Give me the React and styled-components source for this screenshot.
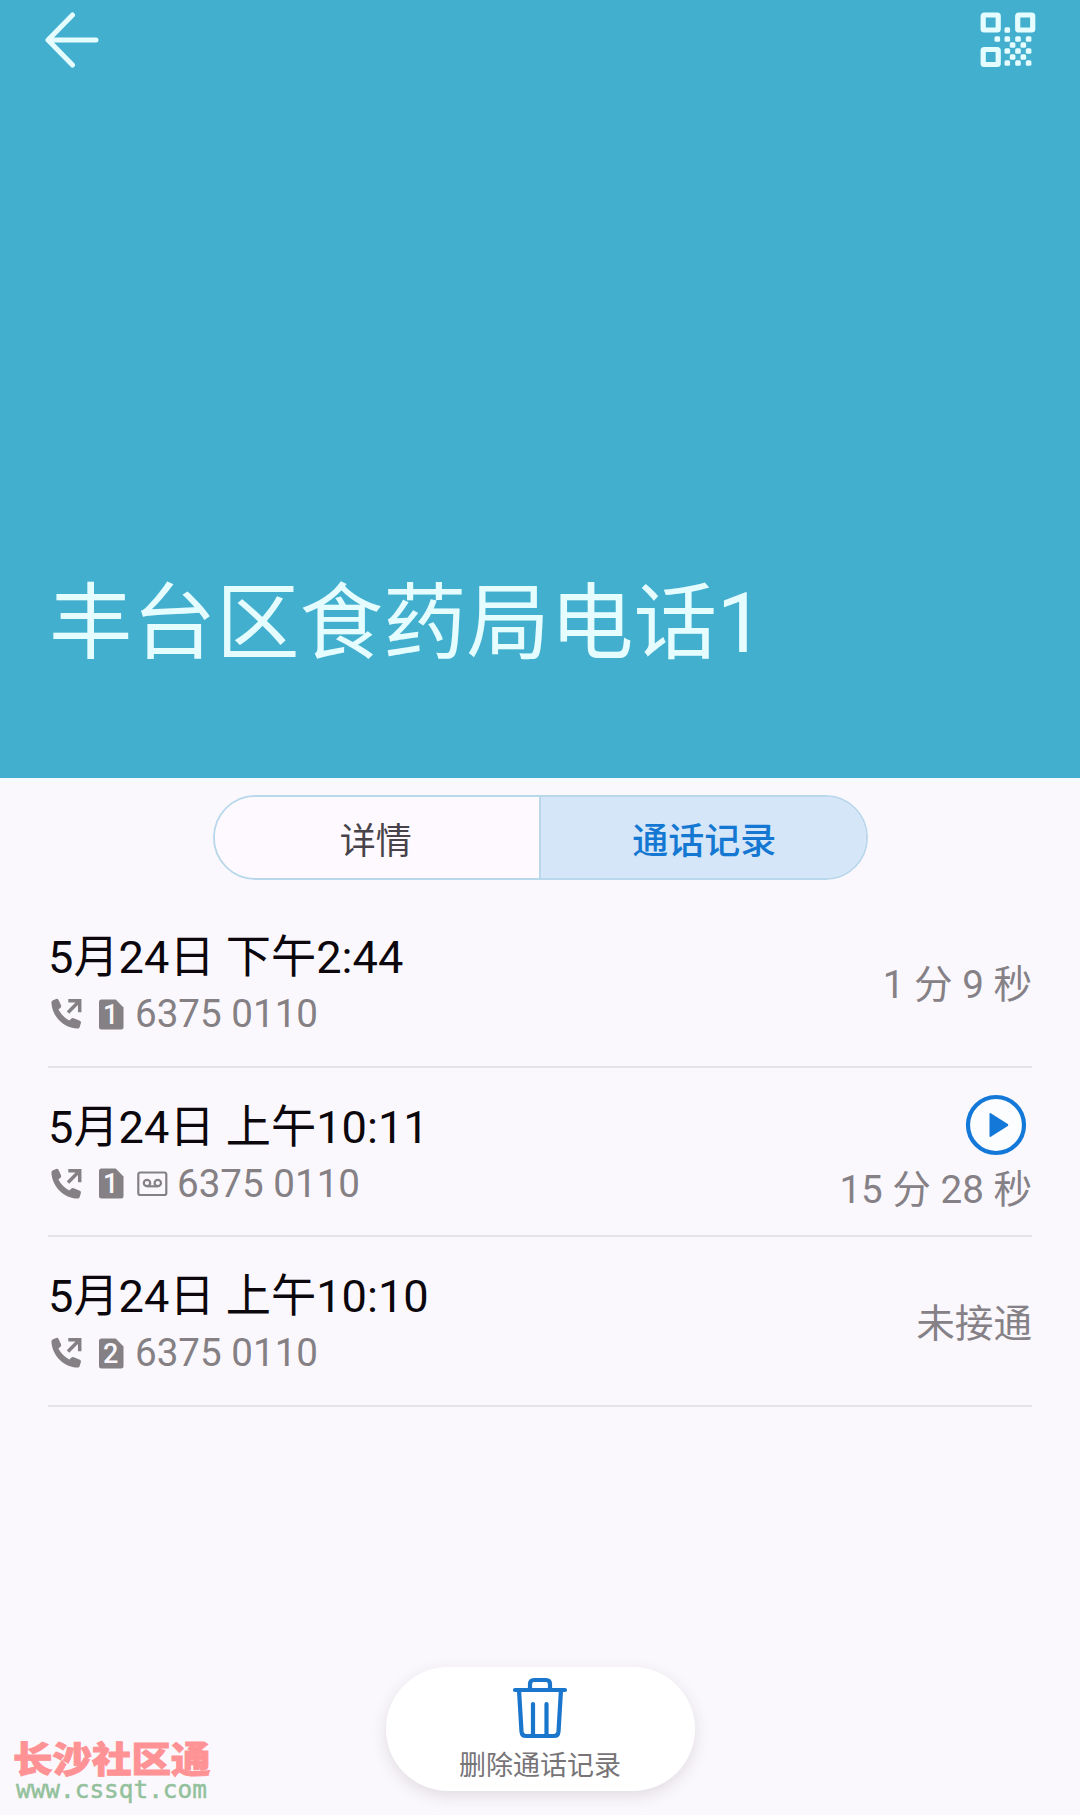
import React from 'react';
import styled, { createGlobalStyle } from 'styled-components';

const GlobalStyle = createGlobalStyle`
  * {
    box-sizing: border-box;
  }

  body {
    margin: 0;
    background-color: #fbf8fd;
    font-family: Roboto, 'Noto Sans CJK SC', sans-serif;
  }
`;

const Screen = styled.div`
  position: relative;
  display: flex;
  flex-direction: column;
  width: 1080px;
  height: 1815px;
  overflow: hidden;
  background-color: #fbf8fd;
`;

const Header = styled.header`
  display: flex;
  flex-direction: column;
  justify-content: space-between;
  flex: none;
  height: 778px;
  padding: 12px 44px 104px;
  color: #e6fdff;
  background-color: #43afcf;
  box-shadow: 0 4px 0 #f4fbff;
`;

const Toolbar = styled.div`
  display: flex;
  justify-content: space-between;
`;

const IconButton = styled.button`
  display: flex;
  padding: 0;
  border: 0;
  color: inherit;
  background: none;
`;

const Name = styled.h1`
  margin: 0;
  padding-left: 5px;
  font-size: 83.5px;
  font-weight: 400;
  line-height: 100px;
  white-space: nowrap;
`;

const Tabs = styled.nav`
  display: flex;
  flex: none;
  align-self: center;
  width: 655px;
  height: 85px;
  margin-top: 17px;
  border: 2px solid #b9d8ec;
  border-radius: 43px;
  overflow: hidden;
`;

const Tab = styled.button`
  flex: 1;
  padding: ${props => (props.$active ? '0 0 0 2px' : '0 2px 0 0')};
  border: 0;
  border-left: ${props => (props.$active ? '2px solid #b9d8ec' : '0')};
  font-family: inherit;
  font-size: 36px;
  font-weight: ${props => (props.$active ? 500 : 400)};
  color: ${props => (props.$active ? '#1478d2' : '#48434a')};
  background-color: ${props => (props.$active ? '#d5e6f9' : '#fdf9fe')};
`;

const CallList = styled.ul`
  margin: 18px 48px 0;
  padding: 0;
  list-style: none;
`;

const CallRow = styled.li`
  display: flex;
  justify-content: space-between;
  height: 169.6px;
  padding-top: 30px;
  border-bottom: 2px solid #e6e3e8;
`;

const CallDate = styled.div`
  font-size: 45.2px;
  line-height: 60px;
  color: #0b070c;
`;

const CallMeta = styled.div`
  display: flex;
  align-items: center;
  height: 44px;
  margin-top: 4px;
  padding-left: 3px;
  color: #848084;
`;

const SimIcon = styled.svg`
  margin: 0 11px 0 17px;
`;

const VoicemailIcon = styled.svg`
  margin: 0 9px 0 2px;
`;

const PhoneNumber = styled.span`
  font-size: 38.6px;
  line-height: 44px;
`;

const CallResult = styled.div`
  display: flex;
  flex-direction: column;
  align-items: flex-end;
  justify-content: ${props => (props.$recorded ? 'flex-start' : 'center')};
  padding-bottom: ${props => (props.$recorded ? 0 : '24px')};
  margin-top: ${props => (props.$recorded ? '-4px' : 0)};
  font-size: 38.6px;
  line-height: 50px;
  color: #858186;
`;

const PlayButton = styled(IconButton)`
  margin: 0 5px 9px 0;
  color: #1478d8;
`;

const DeleteButton = styled.button`
  display: flex;
  flex-direction: column;
  align-items: center;
  align-self: center;
  width: 309px;
  height: 124px;
  margin: auto 0 24px;
  padding: 10px 0 0;
  border: 0;
  border-radius: 62px;
  font-family: inherit;
  font-size: 27px;
  line-height: 36px;
  color: #777477;
  background-color: #ffffff;
  box-shadow: 0 5px 16px rgba(40, 30, 50, 0.13);

  svg {
    margin-bottom: 9px;
    color: #1a76cc;
  }
`;

const Watermark = styled.div`
  position: absolute;
  left: 13px;
  bottom: 12px;
`;

const WatermarkName = styled.div`
  font-family: 'Noto Sans CJK SC', sans-serif;
  font-size: 39.5px;
  font-weight: 900;
  line-height: 38px;
  color: #ff9294;
  -webkit-text-stroke: 1px #ff9294;
  transform: scaleY(0.92);
`;

const WatermarkUrl = styled.div`
  padding-left: 3px;
  font-family: 'DejaVu Sans Mono', monospace;
  font-size: 24.4px;
  line-height: 27px;
  color: #93c19c;
  -webkit-text-stroke: 0.5px #93c19c;
`;

const calls = [
  { date: '5月24日 下午2:44', sim: 1, number: '6375 0110', result: '1 分 9 秒' },
  { date: '5月24日 上午10:11', sim: 1, number: '6375 0110', result: '15 分 28 秒', recorded: true },
  { date: '5月24日 上午10:10', sim: 2, number: '6375 0110', result: '未接通' },
];

// Dots in the lower right corner of the QR icon
const qrDots = [
  [27.3, 18], [17.3, 27], [27.3, 27], [38, 27], [48.6, 27],
  [32.6, 33], [43.3, 33], [27.3, 39], [38, 39], [48.6, 39],
  [32.6, 45], [43.3, 45], [27.3, 51], [38, 51], [48.6, 51],
];

const BackIcon = () => (
  <svg width="56" height="56" viewBox="0 0 56 56" fill="none" stroke="currentColor" strokeWidth="5" strokeLinecap="round" strokeLinejoin="round">
    <path d="M28.5 3 4 28l24.500 25M4 28h48" />
  </svg>
);

const QrIcon = () => (
  <svg width="56" height="56" viewBox="0 0 56 56" fill="none">
    <g stroke="currentColor" strokeWidth="5.2" strokeLinejoin="round">
      <rect x="3.2" y="3" width="15" height="15" rx="1" />
      <rect x="37.7" y="3" width="15" height="15" rx="1" />
      <rect x="3.2" y="37.5" width="15" height="15" rx="1" />
    </g>
    {qrDots.map(([x, y]) => (
      <rect key={`${x}-${y}`} x={x - 2.8} y={y - 2.8} width="5.6" height="5.6" rx="1.5" fill="currentColor" />
    ))}
  </svg>
);

const OutgoingIcon = () => (
  <svg width="31" height="32" viewBox="0 0 31 32" fill="none">
    <path d="M2 2.200 5.200.9q1.600-.5 2.400 1L10 7.300q.6 1.400-.5 2.400L7.400 11.600q3.600 6.900 10.800 11l2-1.900q1.100-1 2.600-.4l6 2.400q1.500.6 1.100 2.200l-1.200 4.200q-.4 1.500-2 1.500C12.800 30.300 1.200 18.500.4 4.700Q.4 2.900 2 2.200Z" fill="currentColor" />
    <path d="M17.300 2.700h11.400v11.600M28.200 3.200 17 14.400" stroke="currentColor" strokeWidth="3.500" />
  </svg>
);

const Sim = ({ slot }) => (
  <SimIcon width="25" height="31" viewBox="0 0 25 31">
    <path d="M2.500.5h14.200L24.500 8.500v19.500q0 2.500-2.500 2.500H2.500Q0 30.500 0 28V3Q0 .5 2.500.5Z" fill="currentColor" />
    <text x="11.800" y="25.300" textAnchor="middle" fontSize="27" fontWeight="500" fill="#fbf8fd">
      {slot}
    </text>
  </SimIcon>
);

const Voicemail = () => (
  <VoicemailIcon width="31" height="26" viewBox="0 0 31 26" fill="none" stroke="currentColor" strokeWidth="2.200">
    <rect x="1.300" y="1.500" width="28" height="22.500" rx="2" />
    <circle cx="10" cy="12" r="3.200" />
    <circle cx="20.800" cy="12" r="3.200" />
    <path d="M10 15.300h10.800" />
  </VoicemailIcon>
);

const PlayIcon = () => (
  <svg width="62" height="62" viewBox="0 0 62 62">
    <circle cx="31" cy="31" r="28" fill="#fbfdff" stroke="currentColor" strokeWidth="4.200" />
    <path d="M24.500 20v22q0 1.500 1.300.7l17-10.700q1.200-1 0-1.900l-17-10.800q-1.300-.8-1.300.7Z" fill="currentColor" />
  </svg>
);

const TrashIcon = () => (
  <svg width="56" height="62" viewBox="0 0 56 62" fill="none" stroke="currentColor" strokeWidth="4.200" strokeLinecap="round" strokeLinejoin="round">
    <path d="M3 13h50M18 13V7q0-4 4-4h12q4 0 4 4v6" />
    <path d="M7 13l2.500 41.500q.4 4.500 4.500 4.500h28q4.100 0 4.500-4.500L49 13" />
    <path d="M21 27v32M34.500 27v32" />
  </svg>
);

const App = () => (
  <Screen>
    <GlobalStyle />
    <Header>
      <Toolbar>
        <IconButton aria-label="返回">
          <BackIcon />
        </IconButton>
        <IconButton aria-label="二维码">
          <QrIcon />
        </IconButton>
      </Toolbar>
      <Name>丰台区食药局电话1</Name>
    </Header>
    <Tabs>
      <Tab>详情</Tab>
      <Tab $active>通话记录</Tab>
    </Tabs>
    <CallList>
      {calls.map(call => (
        <CallRow key={call.date}>
          <div>
            <CallDate>{call.date}</CallDate>
            <CallMeta>
              <OutgoingIcon />
              <Sim slot={call.sim} />
              {call.recorded && <Voicemail />}
              <PhoneNumber>{call.number}</PhoneNumber>
            </CallMeta>
          </div>
          <CallResult $recorded={call.recorded}>
            {call.recorded && (
              <PlayButton aria-label="播放">
                <PlayIcon />
              </PlayButton>
            )}
            {call.result}
          </CallResult>
        </CallRow>
      ))}
    </CallList>
    <DeleteButton>
      <TrashIcon />
      删除通话记录
    </DeleteButton>
    <Watermark>
      <WatermarkName>长沙社区通</WatermarkName>
      <WatermarkUrl>www.cssqt.com</WatermarkUrl>
    </Watermark>
  </Screen>
);

export default App;
